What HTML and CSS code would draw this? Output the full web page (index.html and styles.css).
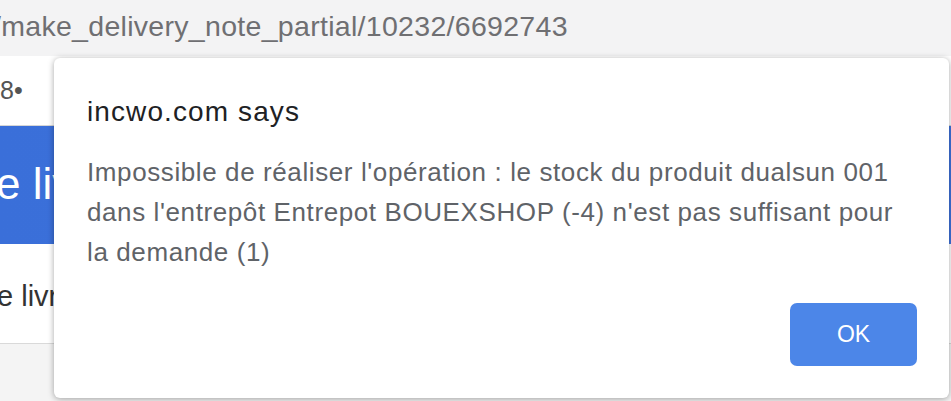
FILE: index.html
```html
<!DOCTYPE html>
<html>
<head>
  <title>make_delivery_note_partial</title>
  <link rel="stylesheet" href="styles.css">
</head>
<body>

  <div class="urlbar">/make_delivery_note_partial/10232/6692743</div>

  <div class="page">
    <div class="crumbs">8•</div>
    <div class="banner">e livraison partielle</div>
    <div class="intro">e livraison partielle</div>
    <div class="footer"></div>
  </div>

  <div class="dialog">
    <div class="dialog-title">incwo.com says</div>
    <div class="dialog-msg">Impossible de réaliser l'opération : le stock du produit dualsun 001 dans l'entrepôt Entrepot BOUEXSHOP (-4) n'est pas suffisant pour la demande (1)</div>
    <div class="dialog-actions">
      <button class="ok-btn">OK</button>
    </div>
  </div>

</body>
</html>
```

FILE: styles.css
```css
body {
  margin: 0;
  font-family: "Liberation Sans", Arial, sans-serif;
  overflow: hidden;
  height: 401px;
  background: #f4f4f4;
}
.urlbar {
  height: 56px;
  box-sizing: border-box;
  padding-top: 10px;
  margin-left: -7px;
  font-size: 28.5px;
  letter-spacing: 0.3px;
  color: #6f6f72;
  background: #f3f3f4;
  white-space: nowrap;
}
.page {
  background: #fff;
  white-space: nowrap;
  overflow: hidden;
}
.crumbs {
  height: 70px;
  box-sizing: border-box;
  padding-top: 20px;
  font-size: 25px;
  color: #555;
  border-bottom: 1px solid #d6d6d6;
}
.banner {
  height: 118px;
  box-sizing: border-box;
  padding-top: 33px;
  margin-left: -4px;
  font-size: 44px;
  color: #fff;
  background: linear-gradient(90deg, #3a6fd9, #3f73dc);
}
.intro {
  height: 100px;
  box-sizing: border-box;
  padding-top: 36px;
  margin-left: -3px;
  font-size: 29px;
  color: #333;
  border-bottom: 1px solid #d9d9d9;
}
.footer {
  height: 56px;
  background: #f4f4f4;
}
.dialog {
  position: absolute;
  left: 54px;
  top: 58px;
  width: 895px;
  height: 340px;
  box-sizing: border-box;
  padding: 36px 32px 32px 33px;
  background: #fff;
  border-radius: 6px;
  box-shadow: 0 1px 6px rgba(0, 0, 0, 0.35);
  display: flex;
  flex-direction: column;
}
.dialog-title {
  font-size: 28px;
  letter-spacing: 1.1px;
  color: #202124;
  line-height: 36px;
}
.dialog-msg {
  margin-top: 22px;
  font-size: 26px;
  letter-spacing: 0.6px;
  line-height: 40px;
  color: #5f6368;
  width: 830px;
}
.dialog-actions {
  margin-top: auto;
  display: flex;
  justify-content: flex-end;
}
.ok-btn {
  width: 127px;
  height: 63px;
  border: none;
  border-radius: 7px;
  background: #4c86e8;
  color: #fff;
  font-family: "Liberation Sans", Arial, sans-serif;
  font-size: 23px;
}
```
